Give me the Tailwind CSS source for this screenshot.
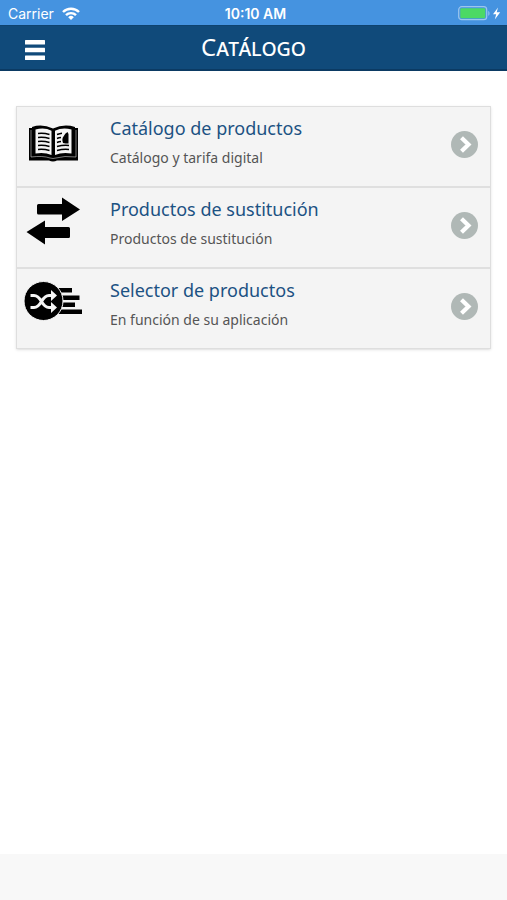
<!DOCTYPE html>
<html lang="es">
<head>
    <meta charset="UTF-8">
    <meta name="viewport" content="width=device-width, initial-scale=1.0">
    <title>Catálogo</title>
    <script src="https://cdn.jsdelivr.net/npm/@tailwindcss/browser@4"></script>
</head>
<body class="min-h-screen flex flex-col bg-white font-['Noto_Sans',sans-serif]">
    <!-- Status bar -->
    <div class="h-[25px] px-2 grid grid-cols-3 items-center bg-[#4593e0] text-white text-sm leading-5 font-['Inter',sans-serif]">
        <div class="flex items-center gap-2 pt-[2px]">
            <span>Carrier</span>
            <svg class="w-[18px] h-[13px]" viewBox="0 0 18 13" fill="none" stroke="currentColor" stroke-width="2.4">
                <path d="M1 5a11.3 11.3 0 0 1 16 0"/>
                <path d="M4 8.2a7 7 0 0 1 10 0"/>
                <path d="M9 13L6.2 10.2a4 4 0 0 1 5.6 0z" fill="currentColor" stroke="none"/>
            </svg>
        </div>
        <div class="pt-[2px] pl-1 text-center font-semibold whitespace-nowrap">10:10 AM</div>
        <div class="flex justify-end pt-[2px]">
            <svg class="w-[43px] h-[15px] -mr-0.5" viewBox="0 0 43 15">
                <rect x=".7" y=".7" width="28" height="13" rx="3" fill="none" stroke="#9cc6ee" stroke-width="1.2"/>
                <rect x="2.3" y="2.3" width="25" height="10" rx="1.3" fill="#4cd964"/>
                <path d="M30.3 5c1.6.5 1.6 4.300 0 4.800z" fill="#9cc6ee"/>
                <path d="M40 1.500l-5 6.700h3.200L36.800 13.500l5.400-7.200h-3.500z" fill="#fff"/>
            </svg>
        </div>
    </div>

    <!-- Header -->
    <header class="h-[46px] grid grid-cols-[70px_1fr_70px] bg-[#104a7a] border-t border-b-2 border-t-[#0e4370] border-b-[#0b3a63] text-white">
        <button type="button" aria-label="Menú" class="flex items-center justify-center pt-1">
            <svg class="w-5 h-5" viewBox="0 0 20 20" fill="currentColor">
                <rect x="0" y="0" width="20" height="4.500" rx=".5"/>
                <rect x="0" y="7.800" width="20" height="4.500" rx=".5"/>
                <rect x="0" y="15.500" width="20" height="4.500" rx=".5"/>
            </svg>
        </button>
        <h1 class="text-center text-2xl leading-[42px] [font-variant:small-caps]">Catálogo</h1>
    </header>

    <!-- Options -->
    <main class="flex-1 px-4 pt-[35px]">
        <ul class="border border-[#dedede] divide-y-2 divide-[#dfdfdf] bg-[#f4f4f4] shadow-sm">
            <li>
                <a href="#" class="flex items-start h-[79px] pl-[6px] pr-3">
                    <svg class="w-[60px] h-[60px] mt-2 shrink-0" viewBox="0 0 60 60">
                        <path d="M6 13h3v-1q10-3.500 21 1.500q11-5 22-1.500v1h3v32.500H34q-4 2-8 0H6z"/>
                        <path d="M8 15v27q12-1.500 19 1q3 1 6 0q8-2.500 20-1V15" fill="none" stroke="#f4f4f4" stroke-width=".5"/>
                        <path d="M12.500 14.500q9-2.500 16 1.200v24.300q-7-3-16-1.500zM48.500 14.500q-9-2.500-16.500 1.200v24.300q7-3 16.500-1.500z" fill="#f4f4f4"/>
                        <path d="M15 18.500q6-.6 11.500 1M15 22.500q6-.6 11.500 1M15 26.500q6-.6 11.500 1M15 30.500q6-.6 11.500 1M15 34.500q6-.6 11.500 1M34 19.500q3-1 5-1.200M34 23.500q2-.8 4-1M34 27.500q2-.8 4-1M34 31.500q6-1.600 12-1M34 35.500q6-1.600 12-1" fill="none" stroke="#000" stroke-width="1.500"/>
                        <path d="M40 28q-1.500-4 .5-6.500 1.500-3.500 4-4.500 1.500 1.500 1 4.500v7h-3z"/>
                    </svg>
                    <div class="flex-1 pl-[27px] pt-[7px]">
                        <h2 class="text-lg leading-7 text-[#1c5283]">Catálogo de productos</h2>
                        <p class="mt-1 text-sm leading-6 text-[#555]">Catálogo y tarifa digital</p>
                    </div>
                    <svg class="w-[27px] h-[27px] mt-6 shrink-0" viewBox="0 0 27 27">
                        <circle cx="13.500" cy="13.500" r="13.500" fill="#b0b8b6"/>
                        <path d="M10.500 6.700l7 6.800-7 6.800" fill="none" stroke="#fff" stroke-width="4.200"/>
                    </svg>
                </a>
            </li>
            <li>
                <a href="#" class="flex items-start h-[79px] pl-[6px] pr-3">
                    <svg class="w-[60px] h-[60px] mt-2 shrink-0" viewBox="0 0 60 60">
                        <path d="M15.500 8H39V1.500L57 13.500 39 25v-6.500H15.500q-1.500 0-1.500-1.500V9.500Q14 8 15.500 8z"/>
                        <path d="M45.500 31H22v-6.500L3.500 36 22 48.500V42h23.500q1.500 0 1.500-1.500v-8q0-1.500-1.500-1.500z"/>
                    </svg>
                    <div class="flex-1 pl-[27px] pt-[7px]">
                        <h2 class="text-lg leading-7 text-[#1c5283]">Productos de sustitución</h2>
                        <p class="mt-1 text-sm leading-6 text-[#555]">Productos de sustitución</p>
                    </div>
                    <svg class="w-[27px] h-[27px] mt-6 shrink-0" viewBox="0 0 27 27">
                        <circle cx="13.500" cy="13.500" r="13.500" fill="#b0b8b6"/>
                        <path d="M10.500 6.700l7 6.800-7 6.800" fill="none" stroke="#fff" stroke-width="4.200"/>
                    </svg>
                </a>
            </li>
            <li>
                <a href="#" class="flex items-start h-[79px] pl-[6px] pr-3">
                    <svg class="w-[60px] h-[60px] mt-2 shrink-0" viewBox="0 0 60 60">
                        <path d="M34 11h15v4.500H34zM36 18.500h20.500V23H36zM38 25.500h14V30H38zM34 32.500h25V37H34z"/>
                        <circle cx="20.500" cy="24" r="19.500" stroke="#f4f4f4" stroke-width="1"/>
                        <path d="M7.500 18.500h3.500c8 0 7 12 15 12h3M7.500 30.500h3.500c8 0 7-12 15-12h3" fill="none" stroke="#f4f4f4" stroke-width="3"/>
                        <path d="M28 13l6 5.500-6 5.500zM28 25l6 5.500-6 5.500z" fill="#f4f4f4"/>
                    </svg>
                    <div class="flex-1 pl-[27px] pt-[7px]">
                        <h2 class="text-lg leading-7 text-[#1c5283]">Selector de productos</h2>
                        <p class="mt-1 text-sm leading-6 text-[#555]">En función de su aplicación</p>
                    </div>
                    <svg class="w-[27px] h-[27px] mt-6 shrink-0" viewBox="0 0 27 27">
                        <circle cx="13.500" cy="13.500" r="13.500" fill="#b0b8b6"/>
                        <path d="M10.500 6.700l7 6.800-7 6.800" fill="none" stroke="#fff" stroke-width="4.200"/>
                    </svg>
                </a>
            </li>
        </ul>
    </main>

    <footer class="h-[46px] bg-[#f8f8f8]"></footer>
</body>
</html>
